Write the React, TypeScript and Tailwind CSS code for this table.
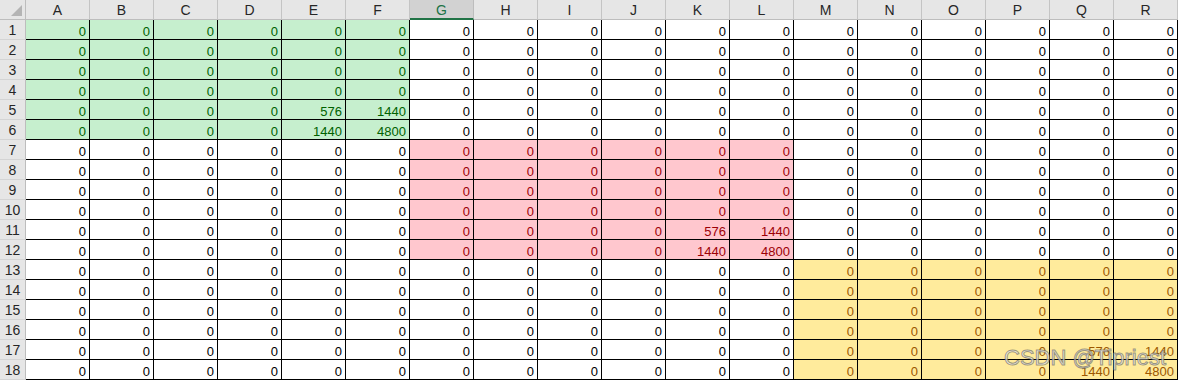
import React from "react";

const COLS = "ABCDEFGHIJKLMNOPQR".split("");
const ROWS = Array.from({ length: 18 }, (_, i) => i + 1);

type Zone = "green" | "red" | "yellow" | "none";

function zoneOf(r: number, c: number): Zone {
  if (r <= 6 && c <= 5) return "green";
  if (r >= 7 && r <= 12 && c >= 6 && c <= 11) return "red";
  if (r >= 13 && c >= 12) return "yellow";
  return "none";
}

function valueOf(r: number, c: number): string {
  const z = zoneOf(r, c);
  if (z === "none") return "0";
  const base = z === "green" ? 0 : z === "red" ? 6 : 12;
  const lr = r - base;
  const lc = c - base;
  if (lr === 5 && lc === 4) return "576";
  if (lr === 5 && lc === 5) return "1440";
  if (lr === 6 && lc === 4) return "1440";
  if (lr === 6 && lc === 5) return "4800";
  return "0";
}

const zoneClass: Record<Zone, string> = {
  green: "bg-[#c6efce] text-[#006100]",
  red: "bg-[#ffc7ce] text-[#9c0006]",
  yellow: "bg-[#ffeb9c] text-[#9c5700]",
  none: "bg-white text-black",
};

export default function App() {
  return (
    <div
      className="relative w-[1180px] h-[382px] overflow-hidden bg-white"
      style={{ fontFamily: '"Liberation Sans", Arial, sans-serif' }}
    >
      <div className="grid grid-cols-[26px_repeat(18,64px)] auto-rows-[20px] text-[13px]">
        {/* corner */}
        <div className="relative bg-[#e6e6e6] border-r border-b border-[#bdbdbd]">
          <div className="absolute right-[3px] bottom-[3px] w-0 h-0 border-l-[11px] border-l-transparent border-b-[11px] border-b-[#b4b4b4]" />
        </div>
        {COLS.map((c) =>
          c === "G" ? (
            <div
              key={c}
              className="flex items-center justify-center bg-[#d2d2d2] border-r border-[#bdbdbd] border-b-2 border-b-[#217346] text-[#217346] text-[14px] leading-none pt-[2px]"
            >
              {c}
            </div>
          ) : (
            <div
              key={c}
              className="flex items-center justify-center bg-[#e6e6e6] border-r border-b border-[#c4c4c4] border-b-[#bdbdbd] text-[#262626] text-[14px] leading-none pt-[1px]"
            >
              {c}
            </div>
          )
        )}
        {ROWS.map((r) => (
          <React.Fragment key={r}>
            <div className="flex items-center justify-center bg-[#e6e6e6] border-r border-b border-[#bdbdbd] border-b-[#d4d4d4] text-[#262626] text-[14px] leading-none pt-[1px]">
              {r}
            </div>
            {COLS.map((c, ci) => {
              const z = zoneOf(r, ci);
              return (
                <div
                  key={c}
                  className={`flex items-end justify-end pr-[3px] leading-[15px] border-r border-b border-black ${zoneClass[z]}`}
                >
                  {valueOf(r, ci)}
                </div>
              );
            })}
          </React.Fragment>
        ))}
      </div>
      <div
        className="absolute left-[1004px] top-[345px] text-[22px] leading-[26px] whitespace-nowrap text-[rgba(236,236,236,0.72)] [-webkit-text-stroke:1px_rgba(90,90,90,0.6)]"
        style={{ fontFamily: '"Liberation Sans", Arial, sans-serif' }}
      >
        CSDN @Tipriest
      </div>
    </div>
  );
}
